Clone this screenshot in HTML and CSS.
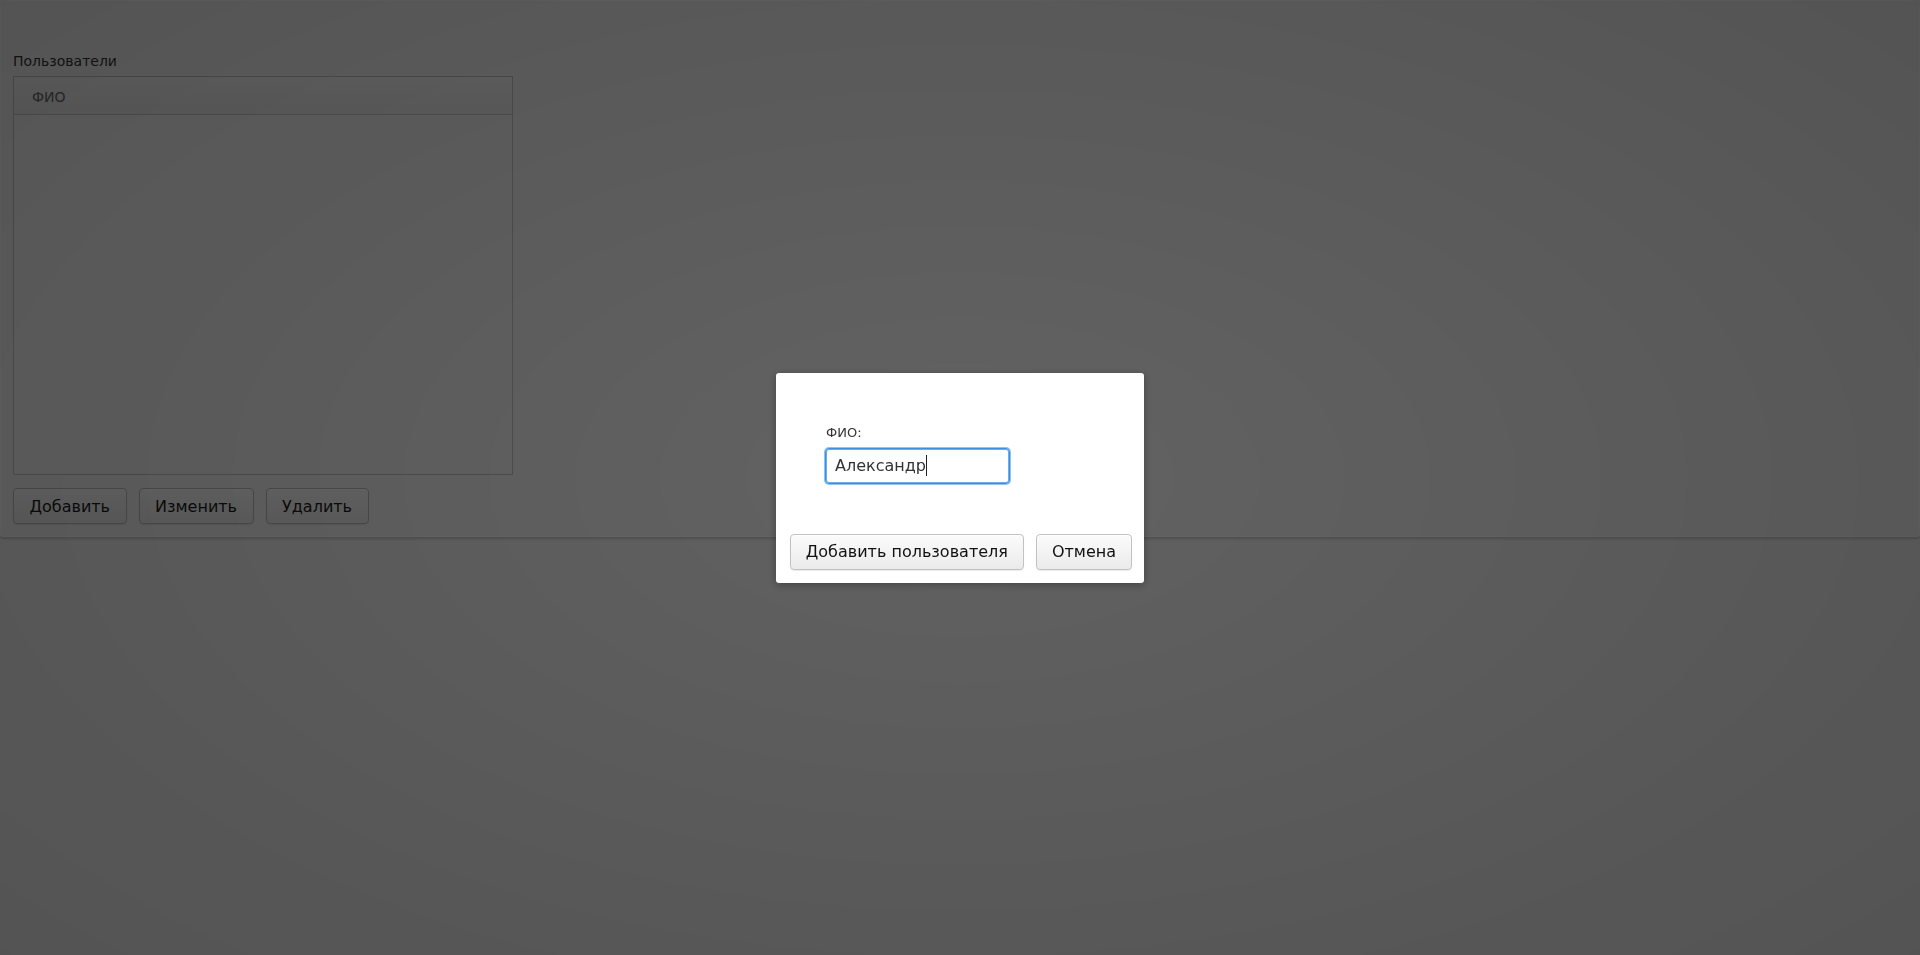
FILE: index.html
```html
<!DOCTYPE html>
<html lang="ru">
<head>
<meta charset="utf-8">
<title>Пользователи</title>
<link rel="stylesheet" href="styles.css">
</head>
<body>
<div class="app">
  <section class="panel">
    <div class="section-label">Пользователи</div>
    <div class="table">
      <div class="table-header"><span class="col-title">ФИО</span></div>
      <div class="table-body"></div>
    </div>
    <div class="actions">
      <button class="btn">Добавить</button>
      <button class="btn">Изменить</button>
      <button class="btn">Удалить</button>
    </div>
  </section>
</div>

<div class="overlay">
  <div class="dialog">
    <div class="dialog-content">
      <label class="field-label">ФИО:</label>
      <div class="text-input focused"><span class="value">Александр</span><span class="caret"></span></div>
    </div>
    <div class="dialog-actions">
      <button class="btn btn-dialog">Добавить пользователя</button>
      <button class="btn btn-dialog">Отмена</button>
    </div>
  </div>
</div>
</body>
</html>
```

FILE: styles.css
```css
* { box-sizing: border-box; }

html, body {
  margin: 0;
  padding: 0;
  height: 100%;
}

body {
  background: #f2f2f2;
  font-family: "DejaVu Sans", "Liberation Sans", sans-serif;
  color: #333;
  overflow: hidden;
}

.app {
  height: 100%;
}

.panel {
  height: 537px;
  background: #f4f4f4;
  border: 1px solid #fbfbfb;
  border-radius: 3px;
  box-shadow: 0 2px 3px rgba(0, 0, 0, 0.18);
  padding: 52px 12px 12px 12px;
  display: flex;
  flex-direction: column;
}

.section-label {
  font-size: 14px;
  line-height: 16px;
  color: #333;
  margin-bottom: 7px;
}

.table {
  width: 500px;
  height: 400px;
  border: 1px solid #c4c4c4;
  background: #f5f5f5;
  display: flex;
  flex-direction: column;
}

.table-header {
  height: 38px;
  border-bottom: 1px solid #c8c8c8;
  background: linear-gradient(#f7f7f7, #ededed);
  display: flex;
  align-items: center;
  padding-left: 18px;
  padding-top: 2px;
}

.col-title {
  font-size: 14px;
  line-height: 16px;
  color: #6a6a6a;
}

.table-body {
  flex: 1;
}

.actions {
  display: flex;
  gap: 12px;
  margin-top: 13px;
}

.btn {
  font-family: "DejaVu Sans", "Liberation Sans", sans-serif;
  font-size: 16px;
  line-height: 19px;
  height: 36px;
  padding: 0 15.5px;
  border: 1px solid #bcbcbc;
  border-radius: 4px;
  background: linear-gradient(#fbfbfb, #ebebeb);
  box-shadow: inset 0 1px 0 #ffffff, 0 1px 1px rgba(0, 0, 0, 0.08);
  color: #1c1c1c;
  margin: 0;
  white-space: nowrap;
}

.overlay {
  position: fixed;
  inset: 0;
  background: radial-gradient(ellipse 70% 75% at 50% 50%, rgba(0, 0, 0, 0.595) 0%, rgba(0, 0, 0, 0.64) 70%, rgba(0, 0, 0, 0.66) 100%);
  display: flex;
  align-items: center;
  justify-content: center;
}

.dialog {
  width: 368px;
  height: 210px;
  background: #ffffff;
  border-radius: 3px;
  box-shadow: 0 2px 8px rgba(0, 0, 0, 0.3);
  display: flex;
  flex-direction: column;
  padding: 0 12px 13px 12px;
}

.dialog-content {
  flex: 1;
  padding: 52px 0 0 37px;
  display: flex;
  flex-direction: column;
  align-items: flex-start;
}

.field-label {
  font-size: 13px;
  line-height: 16px;
  color: #333;
  padding-left: 1px;
  margin-bottom: 7px;
}

.text-input {
  width: 185px;
  height: 36px;
  border: 1px solid #3b8fe3;
  border-radius: 4px;
  background: #fff;
  box-shadow: 0 0 0 1px #8fc3f2, inset 0 0 0 1px #6eaceb;
  display: flex;
  align-items: center;
  padding-left: 9px;
  font-size: 16px;
  line-height: 19px;
  color: #333;
}

.caret {
  display: inline-block;
  width: 1px;
  height: 21px;
  background: #222;
  margin-left: 0;
}

.dialog-actions {
  display: flex;
  gap: 12px;
  justify-content: flex-end;
}

.btn-dialog {
  padding: 0 15px;
  border-color: #c2c2c2;
  color: #111;
}
```
